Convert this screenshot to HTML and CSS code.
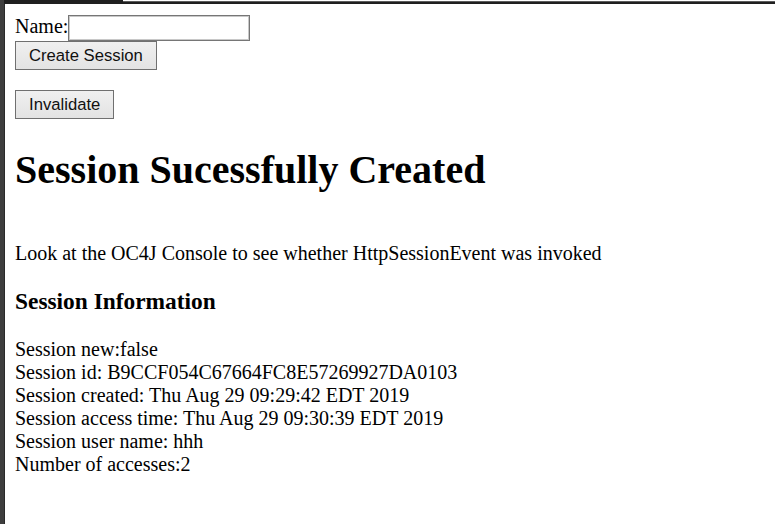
FILE: index.html
```html
<!DOCTYPE html>
<html>
<head>
<meta charset="utf-8">
<title>Session</title>
<link rel="stylesheet" href="styles.css">
</head>
<body>
<div class="window">
  <div class="topbar"><div class="topbar-tab"></div><div class="topbar-rest"></div></div>
  <div class="content">
    <form class="form">
      <div class="name-row"><span class="label">Name:</span><input class="name-input" type="text"></div>
      <button type="button" class="btn">Create Session</button>
    </form>
    <form class="form">
      <button type="button" class="btn">Invalidate</button>
    </form>
    <h1 class="title">Session Sucessfully Created</h1>
    <div class="note"><br>Look at the OC4J Console to see whether HttpSessionEvent was invoked</div>
    <h3 class="subtitle">Session Information</h3>
    <div class="info">
      Session new:false<br>
      Session id: B9CCF054C67664FC8E57269927DA0103<br>
      Session created: Thu Aug 29 09:29:42 EDT 2019<br>
      Session access time: Thu Aug 29 09:30:39 EDT 2019<br>
      Session user name: hhh<br>
      Number of accesses:2
    </div>
  </div>
</div>
</body>
</html>
```
FILE: styles.css
```css
html, body {
  margin: 0;
  padding: 0;
  background: #fff;
}
body {
  font-family: "Liberation Serif", "Times New Roman", serif;
  font-size: 20px;
  color: #000;
}
.window {
  min-height: 524px;
  box-sizing: border-box;
  border-left: 4px solid #3e3e3e;
  box-shadow: inset 1px 0 0 #2a2a2a;
}
.topbar {
  display: flex;
  height: 4px;
}
.topbar-tab {
  width: 119px;
  background: #1f1f1f;
}
.topbar-rest {
  flex: 1;
  background: linear-gradient(#ffffff 0 1px, #5c5c5c 1px 2px, #1f1f1f 2px 4px);
}
.content {
  padding: 10px 10px 10px 11px;
}
.form {
  margin: 0 0 20px 0;
}
.name-row {
  display: flex;
  align-items: baseline;
  padding-top: 1px;
}
.name-input {
  box-sizing: border-box;
  width: 182px;
  height: 26px;
  margin: 0;
  padding: 1px 3px;
  border: 1px solid #767676;
  box-shadow: inset 0 0 0 1px #c8c8c8;
  font-family: "Liberation Sans", Arial, sans-serif;
  font-size: 16.67px;
  background: #fff;
}
.btn {
  display: block;
  box-sizing: border-box;
  height: 29px;
  margin: 0;
  padding: 0 13px;
  border: 1px solid #707070;
  border-radius: 0;
  background: linear-gradient(#f0f0f0, #e3e3e3);
  font-family: "Liberation Sans", Arial, sans-serif;
  font-size: 16.67px;
  color: #111;
}
.title {
  font-size: 40px;
  font-weight: bold;
  margin: 26.8px 0 25.8px 0;
}
.subtitle {
  font-size: 23.4px;
  font-weight: bold;
  margin: 23.4px 0;
}
```
